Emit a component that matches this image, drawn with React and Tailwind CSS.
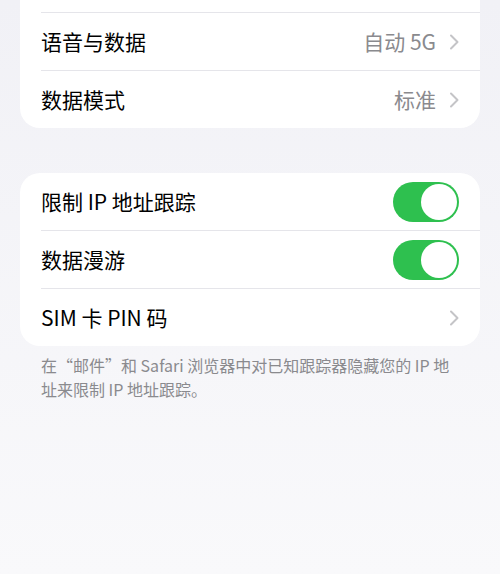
const font = { fontFamily: '"Noto Sans CJK SC", "Noto Sans", sans-serif' };

const Chevron = () => (
  <svg width="10" height="16" viewBox="0 0 10 16" fill="none">
    <path
      d="M2 1.5 L8.5 8 L2 14.5"
      stroke="#c4c4c7"
      strokeWidth="2"
      strokeLinecap="round"
      strokeLinejoin="round"
    />
  </svg>
);

const Toggle = () => (
  <div className="flex h-[40px] w-[66px] items-center justify-end rounded-full bg-[#2ec04f] p-[2px]">
    <div className="size-[36px] rounded-full bg-white" />
  </div>
);

const Row = ({ label, value, toggle, last }) => (
  <div className="pl-[21px]">
    <div
      className={
        "flex items-center justify-between pr-[21px] " +
        (last ? "h-[57px]" : "h-[58px] border-b border-[#e5e5ea]")
      }
    >
      <span className="text-[21px] text-black">{label}</span>
      {toggle ? (
        <Toggle />
      ) : (
        <div className="flex items-center gap-[13px]">
          {value && <span className="text-[21px] text-[#8a8a8e]">{value}</span>}
          <Chevron />
        </div>
      )}
    </div>
  </div>
);

export default function App() {
  return (
    <div
      className="h-[574px] w-[500px] overflow-hidden bg-gradient-to-b from-[#f1f1f6] to-[#f9f9fb]"
      style={font}
    >
      <div className="mx-[20px] rounded-b-[20px] bg-white">
        <div className="ml-[21px] h-[13px] border-b border-[#e5e5ea]" />
        <Row label="语音与数据" value="自动 5G" />
        <Row label="数据模式" value="标准" last />
      </div>

      <div className="mx-[20px] mt-[45px] rounded-[20px] bg-white">
        <Row label="限制 IP 地址跟踪" toggle />
        <Row label="数据漫游" toggle />
        <Row label="SIM 卡 PIN 码" last />
      </div>

      <p className="px-[41px] pt-[7px] text-[16px] leading-[24px] text-[#8a8a8e]">
        在“邮件”和 Safari 浏览器中对已知跟踪器隐藏您的 IP 地
        <br />
        址来限制 IP 地址跟踪。
      </p>
    </div>
  );
}
